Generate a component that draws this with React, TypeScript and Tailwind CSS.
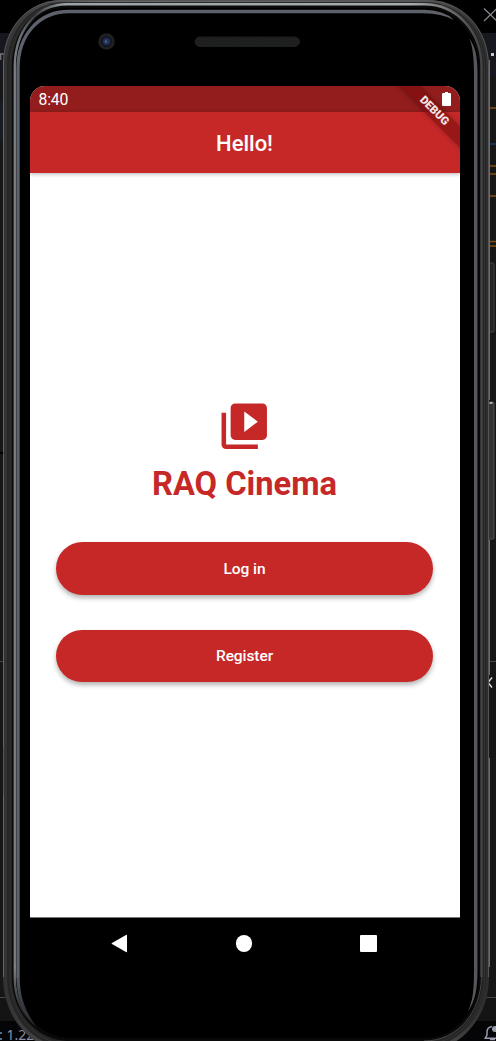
import React from "react";

function Backdrop() {
  return (
    <div className="flex h-full flex-col bg-[#161616]">
      <div className="flex h-[33px] shrink-0 justify-end bg-black">
        <svg className="mt-[7px] h-4 w-[13px] shrink-0" viewBox="0 0 13 16" fill="none" stroke="#85888f" strokeWidth="1.3">
          <path d="M1 1.5 L14 14 M14 1.5 L1 14" />
        </svg>
      </div>
      <div className="flex h-[42px] shrink-0 items-start justify-between bg-[#17181f]">
        <svg className="mt-[20px] h-2 w-4" viewBox="0 0 16 8" fill="none" stroke="#777" strokeWidth="1.3">
          <path d="M.7 7V1H4" />
        </svg>
        <svg className="mt-[20px] h-[3px] w-[5px]" viewBox="0 0 5 3">
          <path d="M0 0h3v3H0z" fill="#c8c8ce" />
        </svg>
      </div>
      <div className="flex h-[922px] shrink-0 justify-between">
        <svg className="h-[922px] w-5 shrink-0" viewBox="0 75 20 922">
          <path d="M0 101h6v40H0z" fill="#191b22" />
          <path d="M0 661.5h6" stroke="#454545" />
          <path d="M0 453h4" stroke="#000" strokeWidth="2" />
        </svg>
        <svg className="h-[922px] w-[14px] shrink-0" viewBox="482 75 14 922" fill="none">
          <path d="M482 108h14M482 166h14M482 174h14M482 196h14M482 241.500h14M482 246h14" stroke="#7e5114" strokeWidth="1.7" />
          <path d="M482 144h14" stroke="#213d55" strokeWidth="1.5" />
          <path d="M482 661.500h14" stroke="#494949" />
          <path d="M492 677.500l-4 5 4 5" stroke="#ddd" strokeWidth="1.4" />
        </svg>
      </div>
      <div className="h-6 shrink-0 border-t border-[#454545] bg-[#141414]" />
      <div className="flex h-5 shrink-0 justify-between bg-[#050507] text-[#8e92a3]">
        <span className="-ml-px mt-[4px] h-4 whitespace-pre font-['Noto_Sans',sans-serif] text-[14px] leading-5">: 1.22</span>
        <svg className="mt-[4px] h-4 w-[12px] shrink-0" viewBox="0 0 12 16" fill="none" stroke="#989cac" strokeWidth="1.5">
          <path d="M8 1.500C4.500 2 3 4 3 7v3L1.200 13.300H12" />
          <circle cx="11" cy="4" r="3" fill="#989cac" stroke="none" />
          <path d="M6 14.500h5" />
        </svg>
      </div>
    </div>
  );
}

function DeviceFrame() {
  return (
    <svg className="absolute inset-0 h-[1041px] w-[496px]" viewBox="0 0 496 1041" fill="none">
      <defs>
        <linearGradient id="side" x1="0" x2="496" y1="0" y2="0" gradientUnits="userSpaceOnUse">
          <stop offset="0" stopColor="#303030" />
          <stop offset=".1" stopColor="#4a4a4a" />
          <stop offset=".2" stopColor="#666766" />
          <stop offset=".85" stopColor="#555" />
          <stop offset="1" stopColor="#292828" />
        </linearGradient>
        <linearGradient id="rim" x1="0" x2="496" y1="0" y2="0" gradientUnits="userSpaceOnUse">
          <stop offset="0" stopColor="#92979a" />
          <stop offset=".04" stopColor="#6d7276" />
          <stop offset=".07" stopColor="#3a3c3e" />
          <stop offset=".13" stopColor="#9da3a6" />
          <stop offset=".83" stopColor="#a7abad" />
          <stop offset=".93" stopColor="#5b5d5f" />
          <stop offset="1" stopColor="#303030" />
        </linearGradient>
        <linearGradient id="rimFade" x1="0" x2="0" y1="960" y2="1025" gradientUnits="userSpaceOnUse">
          <stop offset="0" stopColor="#8a8f93" />
          <stop offset="1" stopColor="#8a8f93" stopOpacity="0" />
        </linearGradient>
        <linearGradient id="lowerRim" x1="0" x2="0" y1="970" y2="1027" gradientUnits="userSpaceOnUse">
          <stop offset="0" stopColor="#5d626c" />
          <stop offset="1" stopColor="#5d626c" stopOpacity=".3" />
        </linearGradient>
        <pattern id="mesh" width="3" height="3" patternUnits="userSpaceOnUse">
          <rect width="3" height="3" fill="#1a1b1b" />
          <path d="M0 0h1v1H0zM1.500 1.500h1v1h-1z" fill="#2c2d2d" />
        </pattern>
      </defs>
      <rect x="488" y="263" width="6" height="69" rx="1" fill="#242424" stroke="#404040" />
      <rect x="488" y="402" width="6" height="137" rx="1" fill="#333" stroke="#505050" />
      <path d="M492.500 403h-3" stroke="#aaa" strokeWidth="2" />
      <path d="M3 64C3 29 27 0 62 0H427C463 0 489 29 489 67V977C489 1016 462 1050 426 1050H66C30 1050 3 1016 3 977Z" fill="url(#side)" />
      <path d="M3.500 977V64C3.500 29 27 .5 62 .5H427C463 .5 488.500 29 488.500 67V977" stroke="#555" />
      <path d="M489.500 60V400M489.500 540V675M489.500 758V967" stroke="#6c6c6c" />
      <path d="M3.500 60V452M3.500 455V747M3.500 795V977" stroke="#666" />
      <path d="M7 977V66C7 31 30 2 65 2H424C460 2 486 31 486 67V977C486 1014 460 1047 424 1047H68C32 1047 7 1014 7 977Z" fill="#252525" />
      <path d="M10 977V66C10 33 32 3 66 3H424C458 3 484.500 31 484.500 67V977C484.500 1014 459 1044 424 1044H69C34 1044 10 1012 10 977Z" stroke="#333" />
      <path d="M12 977V67C12 33 33 3 67 3H424C457 3 482 32 482 67V977C482 1012 458 1041 424 1041H70C36 1041 12 1012 12 977Z" fill="#090909" />
      <path d="M14.800 965V67C14.800 33 34 4.300 67 4.300H424C457 4.300 481.500 32 481.500 67V977" stroke="url(#rim)" strokeWidth="2.400" />
      <path d="M14.800 965V977C14.800 1000 24 1016 36 1026" stroke="url(#rimFade)" strokeWidth="2.400" />
      <path d="M481.500 95V977C481 1012 458 1041 424 1041" stroke="#484848" />
      <path d="M67 8H424C455 8 478.500 34 478.500 68V977C478.500 1010 456 1038 424 1038H71C39 1038 16 1010 16 977V68C16 34 36 8 67 8Z" fill="#000" />
      <path d="M18 977V68C18 36 38 11.500 69 11.500H425" stroke="#5d616b" strokeWidth="3.400" />
      <path d="M424 9.800Q444 10 454 20Q441 13.200 424 13.200Z" fill="#606168" />
      <path d="M469 38C476 47 477.500 58 477.500 75V967C477.500 992 475 1000 468 1012C473 999 474 991 474 967V75C474 60 473 46 469 38Z" fill="#56565c" />
      <path d="M16.300 977C17 1002 25 1017 36 1027C28 1013 19.700 1002 19.700 977Z" fill="url(#lowerRim)" />
      <circle cx="106.500" cy="41.500" r="8.300" fill="#202020" />
      <circle cx="106.500" cy="41.500" r="5.500" fill="#131725" />
      <circle cx="106.500" cy="41.500" r="3.600" fill="#243157" />
      <circle cx="106" cy="41.500" r="1.200" fill="#4c6290" />
      <rect x="195" y="37" width="104.500" height="9.500" rx="4.700" fill="url(#mesh)" stroke="#1d1d1d" />
    </svg>
  );
}

function StatusBar() {
  return (
    <div className="flex h-[26px] shrink-0 items-center justify-between bg-[#931d1d] pl-[8.500px] pr-[9px] text-[15.800px] tracking-[-0.200px] text-white">
      <span className="pt-[2px]">8:40</span>
      <svg className="h-[14px] w-[9px]" viewBox="0 0 9 14" fill="white">
        <path d="M3 0h3v1h2q1 0 1 1v11q0 1-1 1H1q-1 0-1-1V2q0-1 1-1h2Z" />
      </svg>
    </div>
  );
}

function ActionButton({ children }: { children: React.ReactNode }) {
  return (
    <button className="h-[52.500px] w-[377px] shrink-0 rounded-full bg-[#c62828] pt-[2px] text-[15.500px] font-medium tracking-[-0.080px] text-white shadow-[0_3px_5px_rgba(0,0,0,0.3)]">
      {children}
    </button>
  );
}

export default function App() {
  return (
    <div className="relative h-[1041px] w-[496px] overflow-hidden font-[Roboto,sans-serif]">
      <Backdrop />
      <DeviceFrame />
      <div className="absolute inset-0 flex flex-col pl-[30px] pr-9 pt-[86px]">
        <main className="relative flex h-[831px] shrink-0 flex-col overflow-hidden rounded-t-[15px] bg-white">
          <StatusBar />
          <header className="z-10 flex h-[61px] shrink-0 items-center justify-center bg-[#c62828] pr-px pt-px text-[22px] font-medium text-white shadow-[0_1px_4px_rgba(0,0,0,0.3)]">
            Hello!
          </header>
          <section className="flex flex-col items-center pr-px pt-[226px]">
            <svg className="h-[54.500px] w-[54.500px]" viewBox="0 0 24 24" fill="#c62828">
              <path d="M4 6H2v14c0 1.100.9 2 2 2h14v-2H4V6zm16-4H8c-1.100 0-2 .9-2 2v12c0 1.100.9 2 2 2h12c1.100 0 2-.9 2-2V4c0-1.100-.9-2-2-2zm-8 12.500v-9l6 4.500-6 4.500z" />
            </svg>
            <h1 className="mt-[10px] h-10 whitespace-nowrap text-[32.700px] font-bold leading-10 text-[#c62828]">RAQ Cinema</h1>
            <div className="mt-[38.500px] flex flex-col gap-[35px]">
              <ActionButton>Log in</ActionButton>
              <ActionButton>Register</ActionButton>
            </div>
          </section>
          <div className="absolute left-[343.500px] top-[17.500px] z-20 flex h-[14px] w-[120px] rotate-45 items-center justify-center bg-[#7d0c0ca0] text-[11.200px] font-black text-white/90 shadow-[0_0_5px_rgba(0,0,0,0.35)]">
            DEBUG
          </div>
        </main>
        <nav className="flex h-[52px] shrink-0 items-center justify-between border-t border-[#777] bg-black pl-[81px] pr-[83px]">
          <svg className="h-[19px] w-[17px]" viewBox="0 0 17 19" fill="white">
            <path d="M16 1.300V17.700Q16 18.500 15 18L1 10Q0 9.500 1 9L15 1Q16 .5 16 1.300Z" />
          </svg>
          <div className="h-[16.500px] w-[16.500px] rounded-full bg-white" />
          <div className="h-[17px] w-[17px] rounded-[1px] bg-white" />
        </nav>
      </div>
    </div>
  );
}
